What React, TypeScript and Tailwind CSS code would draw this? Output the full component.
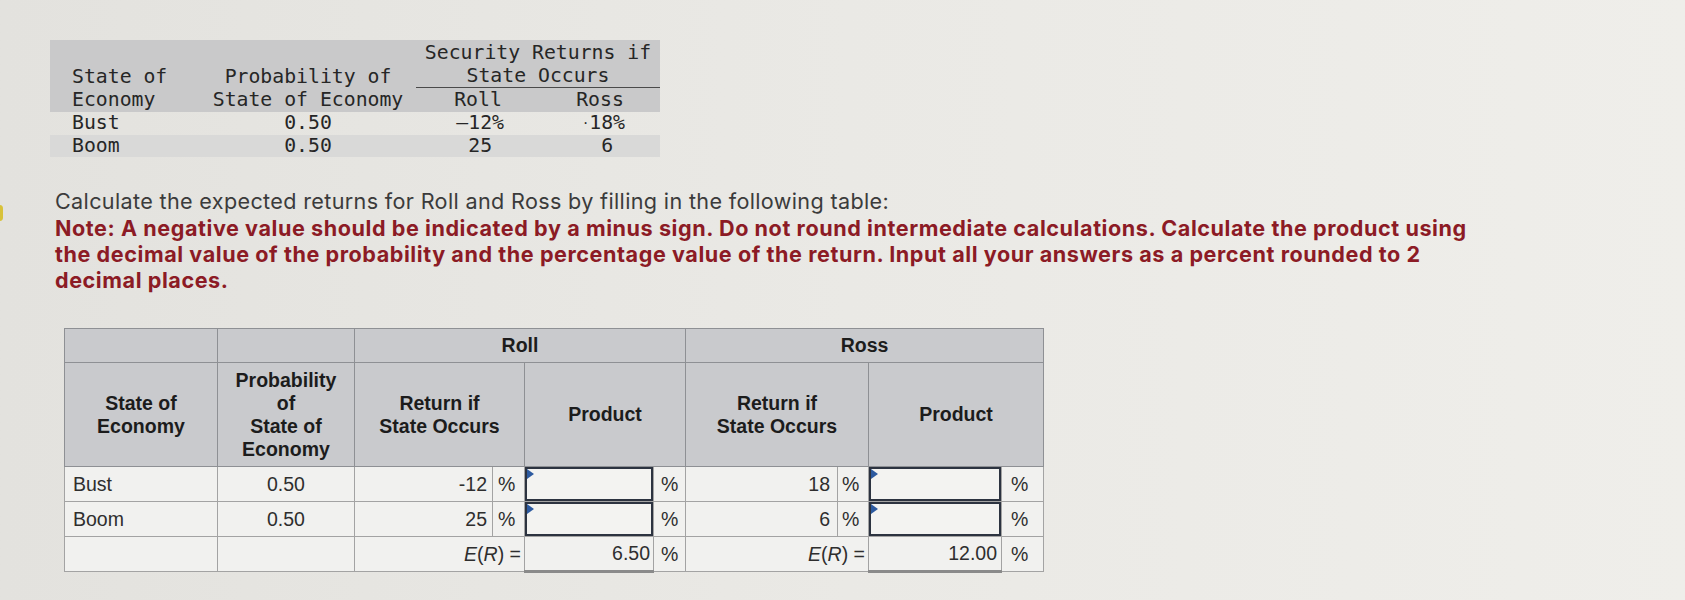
import React from "react";

const head = "border border-[#8e9094] bg-[#c9cacd] font-bold text-[#1c1c1c] text-center align-middle";
const cell = "border border-[#a3a3a3] bg-[#f1f1ef] text-[#2e2e2e]";

function InputBox() {
  return (
    <div className="relative h-[34px] border-2 border-[#2c3340] bg-[#f3f3f1]">
      <span className="absolute left-0 top-0 h-0 w-0 border-y-[5px] border-l-[7px] border-y-transparent border-l-[#2c5aa0]" />
    </div>
  );
}

function TopTable() {
  return (
    <div className="ml-[50px] w-[610px] font-['DejaVu_Sans_Mono',monospace] text-[19.8px] leading-[23px] text-[#262626]">
      <div className="flex bg-[#c9c9ca] pb-[1px] pt-[1px]">
        <div className="flex w-[150px] flex-col justify-end pl-[22px]">
          <span>State of</span>
          <span>Economy</span>
        </div>
        <div className="flex w-[216px] flex-col justify-end text-center">
          <span>Probability of</span>
          <span>State of Economy</span>
        </div>
        <div className="flex w-[244px] flex-col">
          <div className="border-b-[1.5px] border-[#4a4a4a] text-center">
            <div>Security Returns if</div>
            <div>State Occurs</div>
          </div>
          <div className="flex">
            <span className="w-[124px] text-center">Roll</span>
            <span className="w-[120px] text-center">Ross</span>
          </div>
        </div>
      </div>
      <div className="flex leading-[22.5px]">
        <span className="w-[150px] pl-[22px]">Bust</span>
        <span className="w-[216px] text-center">0.50</span>
        <span className="w-[124px] pr-[36px] text-right">–12%</span>
        <span className="w-[120px] pr-[35px] text-right">
          <span className="align-middle text-[12px]">·</span>18%
        </span>
      </div>
      <div className="flex bg-[#d9d9d8] leading-[22.5px]">
        <span className="w-[150px] pl-[22px]">Boom</span>
        <span className="w-[216px] text-center">0.50</span>
        <span className="w-[124px] pr-[36px] text-right">
          25<span className="invisible">%</span>
        </span>
        <span className="w-[120px] pr-[35px] text-right">
          6<span className="invisible">%</span>
        </span>
      </div>
    </div>
  );
}

function Instructions() {
  return (
    <div className="ml-[55px] mt-[31px] font-['Inter',sans-serif] leading-[26.3px] whitespace-nowrap">
      <div className="text-[21.6px] tracking-[0.34px] text-[#3b3b3b]">
        Calculate the expected returns for Roll and Ross by filling in the following table:
      </div>
      <div className="text-[21.6px] font-bold tracking-[0.56px] text-[#8c1b25]">
        Note: A negative value should be indicated by a minus sign. Do not round intermediate calculations. Calculate the product using
      </div>
      <div className="text-[21.6px] font-bold tracking-[0.56px] text-[#8c1b25]">
        the decimal value of the probability and the percentage value of the return. Input all your answers as a percent rounded to 2
      </div>
      <div className="text-[21.6px] font-bold tracking-[0.56px] text-[#8c1b25]">decimal places.</div>
    </div>
  );
}

type Row = { state: string; prob: string; roll: string; ross: string };
const rows: Row[] = [
  { state: "Bust", prob: "0.50", roll: "-12", ross: "18" },
  { state: "Boom", prob: "0.50", roll: "25", ross: "6" },
];

function AnswerTable() {
  const widths = [153, 137, 138, 32, 129, 32, 152, 31, 133, 42];
  return (
    <table className="ml-[64px] mt-[35px] table-fixed border-collapse border border-[#6f7072] font-['Liberation_Sans',Arial,sans-serif] text-[19.5px] leading-[23px]">
      <colgroup>
        {widths.map((w, i) => (
          <col key={i} style={{ width: w }} />
        ))}
      </colgroup>
      <thead>
        <tr className="h-[34px]">
          <th className={head} />
          <th className={head} />
          <th colSpan={4} className={head}>Roll</th>
          <th colSpan={4} className={head}>Ross</th>
        </tr>
        <tr className="h-[104px]">
          <th className={head}>
            State of
            <br />
            Economy
          </th>
          <th className={head}>
            Probability
            <br />
            of
            <br />
            State of
            <br />
            Economy
          </th>
          <th colSpan={2} className={head}>
            Return if
            <br />
            State Occurs
          </th>
          <th colSpan={2} className={head}>Product</th>
          <th colSpan={2} className={head}>
            Return if
            <br />
            State Occurs
          </th>
          <th colSpan={2} className={head}>Product</th>
        </tr>
      </thead>
      <tbody>
        {rows.map((r) => (
          <tr key={r.state} className="h-[34.5px]">
            <td className={`${cell} pl-[8px]`}>{r.state}</td>
            <td className={`${cell} text-center`}>{r.prob}</td>
            <td className={`${cell} pr-[5px] text-right`}>{r.roll}</td>
            <td className={`${cell} pl-[5px]`}>%</td>
            <td className={`${cell} p-0`}>
              <InputBox />
            </td>
            <td className={`${cell} pl-[7px]`}>%</td>
            <td className={`${cell} pr-[7px] text-right`}>{r.ross}</td>
            <td className={`${cell} pl-[4px]`}>%</td>
            <td className={`${cell} p-0`}>
              <InputBox />
            </td>
            <td className={`${cell} pl-[9px]`}>%</td>
          </tr>
        ))}
        <tr className="h-[34.5px]">
          <td className={cell} />
          <td className={cell} />
          <td colSpan={2} className={`${cell} pr-[3px] text-right`}>
            <i>E</i>(<i>R</i>) =
          </td>
          <td className={`${cell} border-b-[3px] border-b-[#8a8a8a] pr-[3px] text-right`}>6.50</td>
          <td className={`${cell} pl-[7px]`}>%</td>
          <td colSpan={2} className={`${cell} pr-[3px] text-right`}>
            <i>E</i>(<i>R</i>) =
          </td>
          <td className={`${cell} border-b-[3px] border-b-[#8a8a8a] pr-[4px] text-right`}>12.00</td>
          <td className={`${cell} pl-[9px]`}>%</td>
        </tr>
      </tbody>
    </table>
  );
}

export default function App() {
  return (
    <div className="relative h-[600px] w-[1685px] overflow-hidden bg-gradient-to-r from-[#e3e2de] via-[#eae9e5] to-[#efeeea] pt-[40px]">
      <span className="absolute left-[-4px] top-[205px] h-[16px] w-[7px] rounded-full bg-[#d8c23a]" />
      <TopTable />
      <Instructions />
      <AnswerTable />
    </div>
  );
}
